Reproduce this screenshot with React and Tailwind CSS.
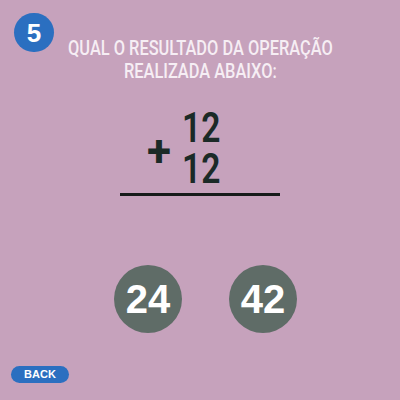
import React from "react";

const App = () => {
  return (
    <div className="relative w-[400px] h-[400px] bg-[#c6a2bc] flex flex-col items-center overflow-hidden" style={{ fontFamily: "Roboto, 'Liberation Sans', sans-serif" }}>
      {/* question number */}
      <div className="absolute left-[14px] top-[13px] w-[40px] h-[39px] rounded-full bg-[#2b6fc0] flex items-center justify-center">
        <span className="text-white text-[26px] font-black leading-none" style={{ fontFamily: "'Liberation Sans', sans-serif" }}>5</span>
      </div>

      <h1 className="mt-[37px] text-center text-[#f6eef4] text-[20px] leading-[22.5px] font-medium scale-x-[0.82] whitespace-nowrap">
        QUAL O RESULTADO DA OPERAÇÃO
        <br />
        REALIZADA ABAIXO:
      </h1>

      {/* operation */}
      <div className="mt-[25px] w-[160px] flex flex-col">
        <div className="flex items-center pl-[27px] gap-[11px]">
          <span className="mt-[6px] text-[#1b2a27] text-[44px] font-bold leading-none">+</span>
          <div className="flex flex-col text-[#1b2a27] text-[42px] font-semibold origin-left scale-x-[0.8]">
            <span className="h-[41px] leading-[41px]">12</span>
            <span className="h-[41px] leading-[41px]">12</span>
          </div>
        </div>
        <div className="mt-[4px] w-[160px] h-[3px] bg-[#161b1a]" />
      </div>

      {/* answers */}
      <div className="mt-[69px] ml-[11px] flex gap-[47px]">
        <button className="w-[68px] h-[68px] rounded-full bg-[#5f6c67] flex items-center justify-center text-white text-[40px] font-black" style={{ fontFamily: "'Liberation Sans', sans-serif" }}>24</button>
        <button className="w-[68px] h-[68px] rounded-full bg-[#5f6c67] flex items-center justify-center text-white text-[40px] font-black" style={{ fontFamily: "'Liberation Sans', sans-serif" }}>42</button>
      </div>

      <div className="mt-auto mb-[17px] self-start ml-[11px]">
        <button className="w-[58px] h-[17px] rounded-full bg-[#2b6fc0] text-white text-[11px] font-bold leading-none flex items-center justify-center" style={{ fontFamily: "'Liberation Sans', sans-serif" }}>BACK</button>
      </div>
    </div>
  );
};

export default App;
